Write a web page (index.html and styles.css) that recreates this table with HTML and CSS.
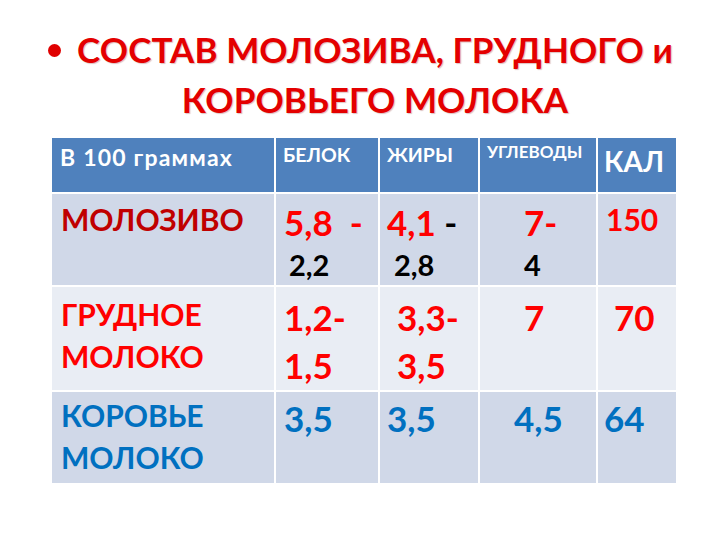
FILE: index.html
```html
<!DOCTYPE html>
<html>
<head>
<meta charset="utf-8">
<link rel="stylesheet" href="styles.css">
</head>
<body>
<div class="slide">
  <div class="title">
    <div class="bullet-col"><span class="bullet"></span></div>
    <h1 class="title-text">СОСТАВ МОЛОЗИВА, ГРУДНОГО и<br>КОРОВЬЕГО МОЛОКА</h1>
  </div>
  <table class="tbl">
    <colgroup>
      <col class="c1"><col class="c2"><col class="c3"><col class="c4"><col class="c5">
    </colgroup>
    <tr class="head">
      <td class="h-first">В 100 граммах</td>
      <td class="h-sm">БЕЛОК</td>
      <td class="h-sm">ЖИРЫ</td>
      <td class="h-xs">УГЛЕВОДЫ</td>
      <td class="h-lg">КАЛ</td>
    </tr>
    <tr class="r1">
      <td class="name dred">МОЛОЗИВО</td>
      <td class="num"><span class="red">5,8&nbsp;&nbsp;-</span><div class="sub sub-b">2,2</div></td>
      <td class="num"><span class="red">4,1</span> -<div class="sub sub-j">2,8</div></td>
      <td class="num carb"><span class="red">7-</span><div class="sub">4</div></td>
      <td class="num kal red">150</td>
    </tr>
    <tr class="r2">
      <td class="name red">ГРУДНОЕ<br>МОЛОКО</td>
      <td class="num red">1,2-<br>1,5</td>
      <td class="num red fat2">3,3-<br>3,5</td>
      <td class="num red carb">7</td>
      <td class="num red kal2">70</td>
    </tr>
    <tr class="r3">
      <td class="name blue">КОРОВЬЕ<br>МОЛОКО</td>
      <td class="num blue">3,5</td>
      <td class="num blue">3,5</td>
      <td class="num blue carb3">4,5</td>
      <td class="num blue">64</td>
    </tr>
  </table>
</div>
</body>
</html>
```
FILE: styles.css
```css
html, body {
  margin: 0;
  padding: 0;
  background: #ffffff;
}
.slide {
  width: 720px;
  height: 540px;
  font-family: Lato, "Noto Sans", "DejaVu Sans", sans-serif;
  font-weight: 700;
  padding-top: 24px;
  box-sizing: border-box;
}
.title {
  display: flex;
  padding-left: 48px;
  width: 627px;
  height: 112px;
}
.bullet-col {
  width: 27px;
  padding-top: 20px;
}
.bullet {
  display: block;
  width: 13px;
  height: 13px;
  border-radius: 50%;
  background: #e00000;
}
.title-text {
  flex: 1;
  margin: 0;
  font-size: 35px;
  font-weight: 700;
  color: #e40000;
  line-height: 50px;
  text-align: center;
  letter-spacing: 0.1px;
  text-shadow: 1px 1px 1px rgba(120,0,0,0.25);
}
.tbl {
  margin-left: 50px;
  border-collapse: collapse;
  table-layout: fixed;
  width: 626px;
}
.c1 { width: 224px; }
.c2 { width: 104px; }
.c3 { width: 100px; }
.c4 { width: 118px; }
.c5 { width: 80px; }
.tbl td {
  border: 2px solid #ffffff;
  vertical-align: top;
  padding: 0 0 0 8px;
}
.head { height: 56px; }
.r1 { height: 93px; }
.r2 { height: 105px; }
.r3 { height: 93px; }
.head td { background: #4f81bd; color: #ffffff; }
.r1 td { background: #d0d8e8; padding-top: 4px; }
.r2 td { background: #e9edf4; padding-top: 6px; }
.r3 td { background: #d0d8e8; padding-top: 2px; }
.tbl .h-first { font-size: 23px; line-height: 26px; letter-spacing: 1.2px; padding-top: 6px; }
.tbl .h-sm { font-size: 19.5px; line-height: 24px; padding-top: 5px; padding-left: 7px; }
.tbl .h-xs { font-size: 17px; line-height: 22px; padding-top: 3px; padding-left: 7px; }
.tbl .h-lg { font-size: 28px; line-height: 34px; padding-top: 6px; padding-left: 6px; }
.name { font-size: 30px; line-height: 42px; }
.tbl .name { padding-left: 9px; }
.num { font-size: 35px; line-height: 48px; color: #000000; }
.dred { color: #c00000; }
.red { color: #ff0000; }
.blue { color: #0070c0; }
.num.red { color: #ff0000; }
.num.blue { color: #0070c0; }
.num .sub { font-size: 29px; line-height: 30px; color: #000000; margin-top: 4px; }
.sub-b { padding-left: 5px; }
.sub-j { padding-left: 7px; }
.tbl .carb { padding-left: 44px; }
.tbl .carb3 { padding-left: 34px; }
.tbl .fat2 { padding-left: 17px; }
.tbl .kal { font-size: 30px; line-height: 42px; padding-left: 8px; }
.tbl .kal2 { padding-left: 16px; }
.tbl tr td:nth-child(3) { padding-left: 7px; }
.tbl tr td.fat2 { padding-left: 17px; }
.tbl tr td:nth-child(5) { padding-left: 6px; }
.tbl tr td.kal { padding-left: 8px; }
.tbl tr td.kal2 { padding-left: 16px; }
```
